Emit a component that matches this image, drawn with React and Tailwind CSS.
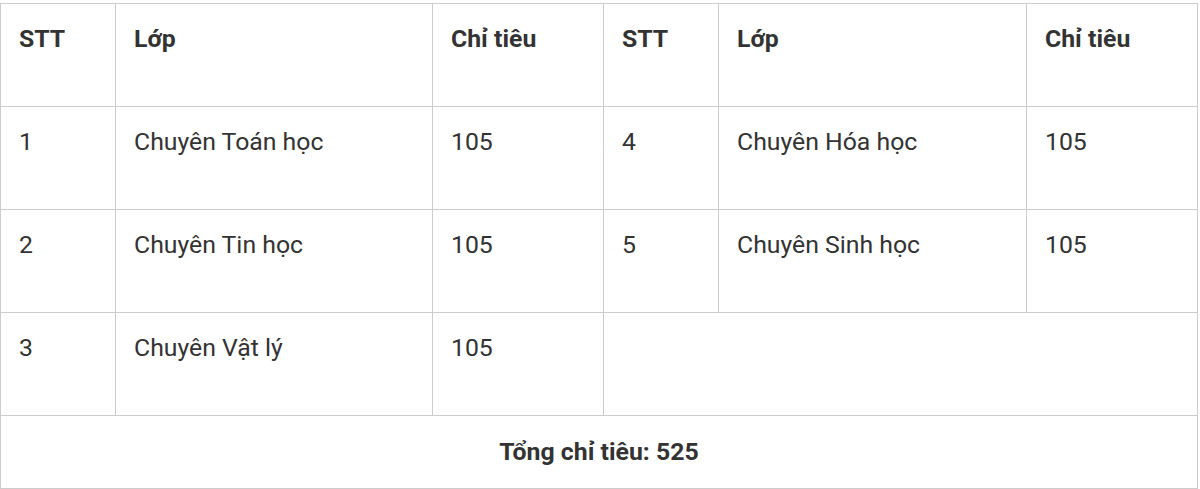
export default function App() {
  const rows = [
    ['1', 'Chuyên Toán học', '105', '4', 'Chuyên Hóa học', '105'],
    ['2', 'Chuyên Tin học', '105', '5', 'Chuyên Sinh học', '105'],
  ];
  const td = 'border border-[#cccccc] align-top px-[18px] pt-[18px] h-[103px]';
  return (
    <div className="w-[1200px] h-[489px] bg-white pt-[3px] font-['Roboto',sans-serif] text-[24.8px] text-[#333333]">
      <table className="table-fixed border-collapse w-[1197px] border border-[#b8b8b8] leading-[1.4]">
        <colgroup>
          <col className="w-[115px]" />
          <col className="w-[317px]" />
          <col className="w-[171px]" />
          <col className="w-[115px]" />
          <col className="w-[308px]" />
          <col className="w-[171px]" />
        </colgroup>
        <thead>
          <tr className="font-bold">
            {['STT', 'Lớp', 'Chỉ tiêu', 'STT', 'Lớp', 'Chỉ tiêu'].map((h, i) => (
              <th key={i} className={`${td} text-left font-bold`}>{h}</th>
            ))}
          </tr>
        </thead>
        <tbody>
          {rows.map((r, i) => (
            <tr key={i}>
              {r.map((c, j) => (
                <td key={j} className={td}>{c}</td>
              ))}
            </tr>
          ))}
          <tr>
            <td className={td}>3</td>
            <td className={td}>Chuyên Vật lý</td>
            <td className={td}>105</td>
            <td className={td} colSpan={3}></td>
          </tr>
          <tr>
            <td colSpan={6} className="border border-[#cccccc] h-[73px] text-center font-bold align-middle">
              Tổng chỉ tiêu: 525
            </td>
          </tr>
        </tbody>
      </table>
    </div>
  );
}
